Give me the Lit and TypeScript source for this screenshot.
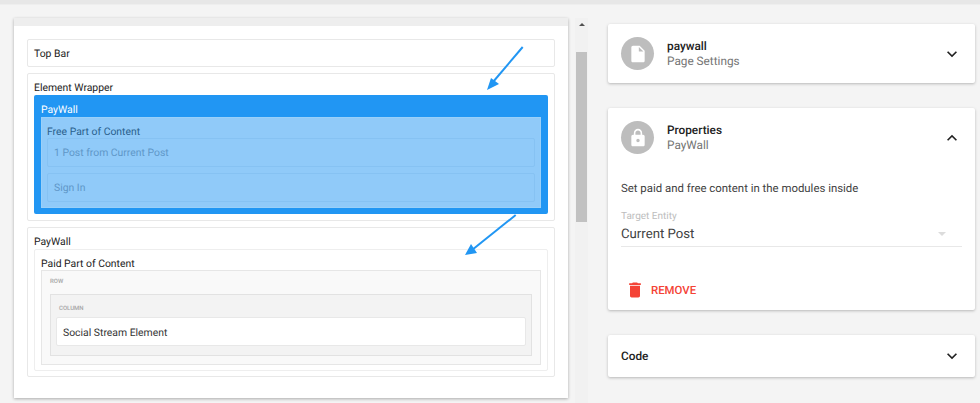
import { LitElement, css, html } from "lit";
import { customElement } from "lit/decorators.js";

const chevronDown = html`<svg class="chev" viewBox="0 0 24 24"><path d="M7.41 8.59 12 13.17l4.59-4.58L18 10l-6 6-6-6z" /></svg>`;
const chevronUp = html`<svg class="chev" viewBox="0 0 24 24"><path d="M7.41 15.41 12 10.83l4.59 4.58L18 14l-6-6-6 6z" /></svg>`;

@customElement("app-root")
export class AppRoot extends LitElement {
  static styles = css`
    :host {
      display: block;
      position: relative;
      width: 980px;
      height: 403px;
      overflow: hidden;
      background: #f4f4f4;
      font-family: Roboto, "Liberation Sans", sans-serif;
      font-size: 11.8px;
      line-height: 14px;
      color: #212121;
      text-rendering: geometricPrecision;
    }

    .topbar {
      height: 4px;
      background: #e7e7e7;
      border-bottom: 1px solid #eeeeee;
    }

    .main {
      display: flex;
      align-items: flex-start;
      padding: 13px 0 0 14px;
    }

    .canvas {
      width: 554px;
      height: 380px;
      box-sizing: border-box;
      flex: none;
      background: #fff;
      border-top: 8px solid #eeeeee;
      box-shadow: 0 1px 3px rgba(0, 0, 0, 0.3);
      padding: 13px 13px 0;
      font-size: 10.4px;
    }

    .scrollbar {
      flex: none;
      width: 13px;
      height: 400px;
      margin-left: 7px;
      background: #f1f1f1;
    }

    .scrollbar .up {
      width: 0;
      height: 0;
      margin: 5px auto 0;
      border: 3px solid transparent;
      border-top: 0;
      border-bottom: 3px solid #505050;
    }

    .scrollbar .thumb {
      width: 11px;
      height: 170px;
      margin: 26px auto 0;
      background: #c1c1c1;
    }

    .box {
      box-sizing: border-box;
      border: 1px solid #e8e8e8;
      border-radius: 2px;
      background: #fff;
    }

    .label {
      display: block;
      height: 14px;
      line-height: 16px;
    }

    .stack {
      display: flex;
      flex-direction: column;
      gap: 6px;
    }

    .topitem {
      height: 28px;
      padding: 7px 6px 0;
    }

    .wrapper {
      height: 148px;
      padding: 6px 6px 0;
    }

    .paywall-blue {
      margin-top: 1px;
      height: 119px;
      background: #2196f3;
      border-radius: 2px;
      padding: 7px;
      box-sizing: border-box;
      color: #fff;
    }

    .free {
      margin-top: 1px;
      height: 91px;
      box-sizing: border-box;
      background: #90caf9;
      border: 1px solid #9ad0f9;
      padding: 6px 5px 0;
      color: #2a5f8c;
    }

    .ghost {
      height: 29px;
      box-sizing: border-box;
      border: 1px solid #86c2f3;
      border-radius: 2px;
      padding: 7px 6px 0;
      color: #5f97c8;
    }

    .ghost + .ghost {
      margin-top: 6px;
    }

    .paid-outer {
      height: 150px;
      padding: 6px 6px 0;
    }

    .paid {
      margin-top: 1px;
      height: 122px;
      padding: 6px 6px 0;
      border-color: #eeeeee;
    }

    .row {
      height: 95px;
      box-sizing: border-box;
      background: #f9f9f9;
      border: 1px solid #e6e6e6;
      padding: 7px 8px 0;
    }

    .tiny {
      display: block;
      font-size: 6px;
      line-height: 8px;
      color: #a5a5a5;
      text-transform: uppercase;
      font-weight: 500;
    }

    .column {
      margin-top: 8px;
      height: 62px;
      box-sizing: border-box;
      background: #f3f3f3;
      border: 1px solid #e2e2e2;
      padding: 10px 5px 0;
    }

    .column .tiny {
      margin-left: 3px;
    }

    .element {
      margin-top: 4px;
      height: 29px;
      padding: 8px 6px 0;
      color: #333;
    }

    .side {
      margin-left: 20px;
      margin-top: 6px;
      width: 367px;
      flex: none;
      display: flex;
      flex-direction: column;
    }

    .card {
      background: #fff;
      box-shadow: 0 1px 3px rgba(0, 0, 0, 0.25);
      border-radius: 2px;
    }

    .card + .card {
      margin-top: 25px;
    }

    .head {
      display: flex;
      align-items: center;
      height: 59px;
      padding: 0 13px;
    }

    .avatar {
      width: 33px;
      height: 33px;
      border-radius: 50%;
      background: #bdbdbd;
      display: flex;
      align-items: center;
      justify-content: center;
      flex: none;
    }

    .avatar svg {
      width: 20px;
      height: 20px;
      fill: #fff;
    }

    .titles {
      margin-left: 13px;
      flex: 1;
      line-height: 15px;
    }

    .title {
      font-weight: 500;
      color: #212121;
    }

    .sub {
      color: #757575;
    }

    .chev {
      width: 20px;
      height: 20px;
      fill: #212121;
      flex: none;
    }

    .body {
      padding: 0 13px 8px;
    }

    .desc {
      margin-top: 14px;
      color: #424242;
      height: 14px;
      font-size: 11.4px;
    }

    .field {
      margin-top: 16px;
      height: 36px;
      border-bottom: 1px solid #e8e8e8;
      position: relative;
      width: 341px;
      box-sizing: border-box;
    }

    .field .float {
      font-size: 10px;
      line-height: 12px;
      color: #bdbdbd;
      display: block;
    }

    .field .value {
      display: block;
      margin-top: 3px;
      font-size: 13.2px;
      line-height: 18px;
      color: #424242;
    }

    .field .caret {
      position: absolute;
      right: 16px;
      top: 21px;
      border: 4px solid transparent;
      border-top: 4px solid #dcdcdc;
      border-bottom: 0;
    }

    .remove {
      display: flex;
      align-items: center;
      margin-top: 31px;
      padding-left: 4px;
      height: 24px;
      color: #f44336;
      font-weight: 500;
      font-size: 11.4px;
    }

    .remove svg {
      width: 20px;
      height: 20px;
      fill: #f44336;
      margin-right: 6px;
    }

    .code {
      display: flex;
      align-items: center;
      justify-content: space-between;
      height: 42px;
      padding: 0 13px;
      font-weight: 500;
    }

    .arrows {
      position: absolute;
      inset: 0;
      pointer-events: none;
    }
  `;

  protected render() {
    return html`
      <div class="topbar"></div>
      <div class="main">
        <div class="canvas">
          <div class="stack">
            <div class="box topitem">Top Bar</div>
            <div class="box wrapper">
              <span class="label">Element Wrapper</span>
              <div class="paywall-blue">
                <span class="label">PayWall</span>
                <div class="free">
                  <span class="label">Free Part of Content</span>
                  <div class="ghost">1 Post from Current Post</div>
                  <div class="ghost">Sign In</div>
                </div>
              </div>
            </div>
            <div class="box paid-outer">
              <span class="label">PayWall</span>
              <div class="box paid">
                <span class="label">Paid Part of Content</span>
                <div class="row">
                  <span class="tiny">Row</span>
                  <div class="column">
                    <span class="tiny">Column</span>
                    <div class="box element">Social Stream Element</div>
                  </div>
                </div>
              </div>
            </div>
          </div>
        </div>
        <div class="scrollbar">
          <div class="up"></div>
          <div class="thumb"></div>
        </div>
        <div class="side">
          <div class="card">
            <div class="head">
              <div class="avatar">
                <svg viewBox="0 0 24 24">
                  <path d="M6 2c-1.1 0-2 .9-2 2v16c0 1.1.9 2 2 2h12c1.1 0 2-.9 2-2V8l-6-6H6zm7 7V3.5L18.5 9H13z" />
                </svg>
              </div>
              <div class="titles">
                <div class="title">paywall</div>
                <div class="sub">Page Settings</div>
              </div>
              ${chevronDown}
            </div>
          </div>
          <div class="card">
            <div class="head">
              <div class="avatar">
                <svg viewBox="0 0 24 24">
                  <path d="M18 8h-1V6c0-2.76-2.24-5-5-5S7 3.24 7 6v2H6c-1.1 0-2 .9-2 2v10c0 1.1.9 2 2 2h12c1.1 0 2-.9 2-2V10c0-1.1-.9-2-2-2zm-6 9c-1.1 0-2-.9-2-2s.9-2 2-2 2 .9 2 2-.9 2-2 2zm3.1-9H8.9V6c0-1.71 1.39-3.1 3.1-3.1 1.71 0 3.1 1.39 3.1 3.1v2z" />
                </svg>
              </div>
              <div class="titles">
                <div class="title">Properties</div>
                <div class="sub">PayWall</div>
              </div>
              ${chevronUp}
            </div>
            <div class="body">
              <div class="desc">Set paid and free content in the modules inside</div>
              <div class="field">
                <span class="float">Target Entity</span>
                <span class="value">Current Post</span>
                <span class="caret"></span>
              </div>
              <div class="remove">
                <svg viewBox="0 0 24 24">
                  <path d="M6 19c0 1.1.9 2 2 2h8c1.1 0 2-.9 2-2V7H6v12zM19 4h-3.5l-1-1h-5l-1 1H5v2h14V4z" />
                </svg>
                REMOVE
              </div>
            </div>
          </div>
          <div class="card code">
            <span>Code</span>
            ${chevronDown}
          </div>
        </div>
      </div>
      <svg class="arrows" width="980" height="403" viewBox="0 0 980 403">
        <g fill="#2196f3" stroke="#2196f3">
          <line x1="522.7" y1="47" x2="493" y2="82" stroke-width="2" />
          <path d="M487 90 491 78 499 84z" stroke="none" />
          <line x1="515.7" y1="215" x2="472" y2="250" stroke-width="2" />
          <path d="M465 255 471 244 477 253z" stroke="none" />
        </g>
      </svg>
    `;
  }
}
